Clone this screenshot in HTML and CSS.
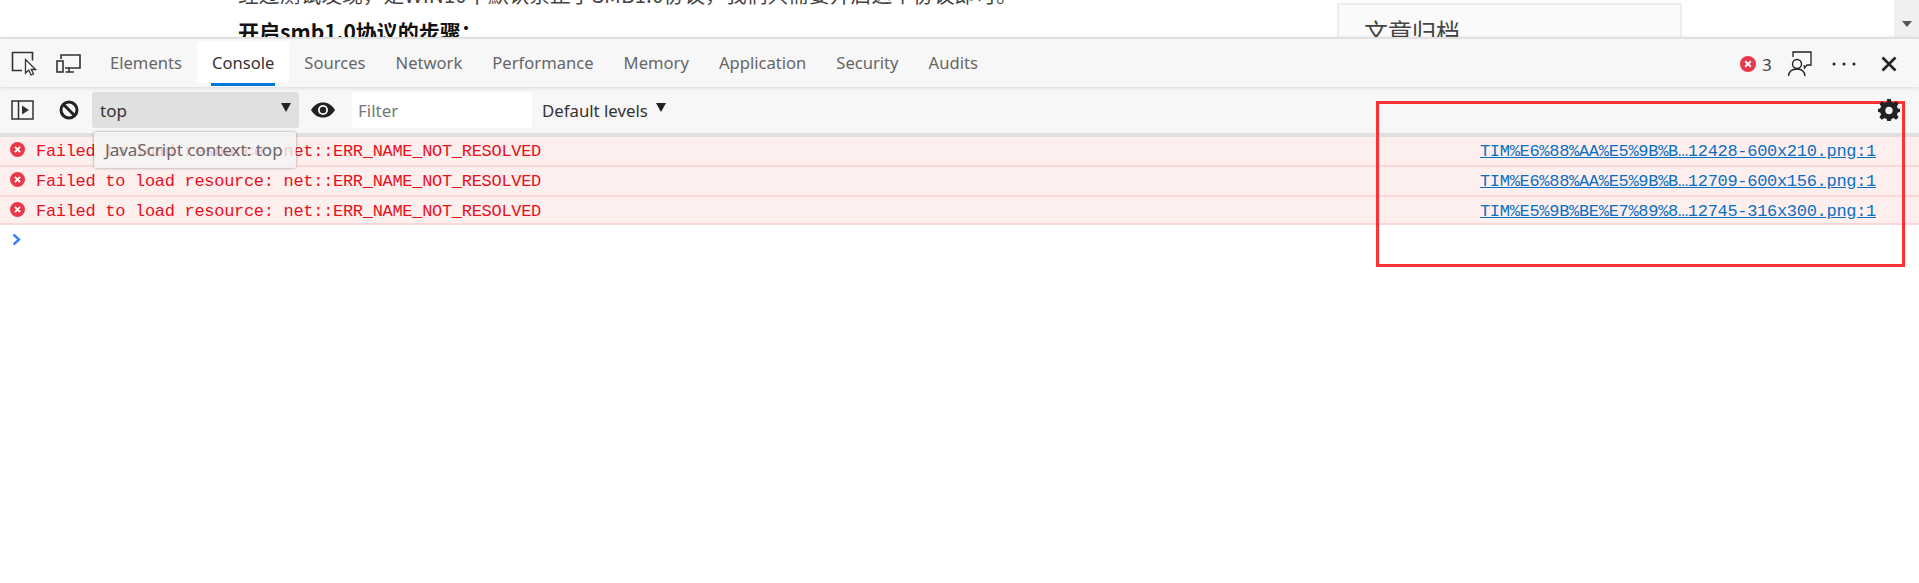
FILE: index.html
```html
<!DOCTYPE html>
<html lang="zh">
<head>
<meta charset="utf-8">
<title>DevTools Console</title>
<link rel="stylesheet" href="styles.css">
</head>
<body>
<div class="page">
  <div class="article">
    <p class="article-line">经过测试发现，是WIN10中默认禁止了SMB1.0协议，我们只需要开启这个协议即可。</p>
    <h3 class="article-head">开启smb1.0协议的步骤：</h3>
  </div>
  <div class="card"><span class="card-title">文章归档</span></div>
  <div class="scrollbar"><span class="scroll-arrow"></span></div>
</div>

<div class="tabbar">
  <div class="tab-tools">
    <svg class="ico" width="26" height="26" viewBox="0 0 26 26"><path d="M11 19.5H1.500V1.500H21.500V9.500" fill="none" stroke="#333" stroke-width="1.600"/><path d="M14.500 8.500V22L17.800 19L20 24L22.500 23L20.300 18.500H24.500Z" fill="#fff" stroke="#333" stroke-width="1.300"/></svg>
    <svg class="ico" width="26" height="20" viewBox="0 0 26 20"><path d="M5 5V1H24V14H9M13 14V18M9.500 18H18" fill="none" stroke="#333" stroke-width="1.600"/><rect x="1" y="7" width="6" height="11" fill="none" stroke="#333" stroke-width="1.600"/></svg>
  </div>
  <div class="tab">Elements</div>
  <div class="tab tab-active">Console</div>
  <div class="tab">Sources</div>
  <div class="tab">Network</div>
  <div class="tab">Performance</div>
  <div class="tab">Memory</div>
  <div class="tab">Application</div>
  <div class="tab">Security</div>
  <div class="tab">Audits</div>
  <div class="tab-right">
    <svg class="err-badge" width="16" height="16" viewBox="0 0 16 16"><circle cx="8" cy="8" r="8" fill="#e8384a"/><path d="M5.200 5.200L10.800 10.800M10.800 5.200L5.200 10.800" stroke="#fff" stroke-width="2"/></svg>
    <span class="err-count">3</span>
    <svg class="feedback" width="26" height="26" viewBox="0 0 26 26"><path d="M6 6V1H24V14H20L17.500 17L17 14" fill="none" stroke="#222" stroke-width="1.300"/><circle cx="10" cy="13" r="4.500" fill="#f7f7f7" stroke="#222" stroke-width="1.400"/><path d="M1.500 25C2 20 5 18 10 18C15 18 17.500 20 18 25" fill="none" stroke="#222" stroke-width="1.400"/></svg>
    <svg class="dots" width="24" height="4" viewBox="0 0 24 4"><circle cx="2" cy="2" r="1.500" fill="#222"/><circle cx="12" cy="2" r="1.500" fill="#222"/><circle cx="22" cy="2" r="1.500" fill="#222"/></svg>
    <svg class="close" width="16" height="16" viewBox="0 0 16 16"><path d="M1.500 1.500L14.500 14.500M14.500 1.500L1.500 14.500" stroke="#222" stroke-width="2.600"/></svg>
  </div>
</div>

<div class="toolbar">
  <svg class="side-ico" width="23" height="20" viewBox="0 0 23 20"><rect x="1" y="1" width="21" height="18" fill="none" stroke="#333" stroke-width="1.500"/><path d="M7.500 1V19" stroke="#333" stroke-width="1.500"/><path d="M11 5.500L18 10L11 14.500Z" fill="#333"/></svg>
  <svg class="clear-ico" width="20" height="20" viewBox="0 0 20 20"><circle cx="10" cy="10" r="8" fill="none" stroke="#222" stroke-width="3"/><path d="M4.500 4.500L15.500 15.500" stroke="#222" stroke-width="3"/></svg>
  <div class="context">
    <span>top</span>
    <span class="caret"></span>
  </div>
  <svg class="eye" width="24" height="16" viewBox="0 0 24 16"><path d="M0 8C3 3 7 .5 12 .5S21 3 24 8C21 13 17 15.500 12 15.500S3 13 0 8Z" fill="#222"/><circle cx="12" cy="8" r="5" fill="#f7f7f7"/><circle cx="12" cy="8" r="3.200" fill="#222"/></svg>
  <div class="filter">Filter</div>
  <div class="levels">Default levels<span class="caret"></span></div>
  <svg class="gear" width="22" height="22" viewBox="0 0 24 24"><path fill="#222" fill-rule="evenodd" d="M10 0H14L14.600 3.300L16.900 4.300L19.700 2.400L22.500 5.200L20.600 8L21.600 10.300L24 10.800V14.200L21.600 14.700L20.600 17L22.500 19.800L19.700 22.600L16.900 20.700L14.600 21.700L14 24H10L9.400 21.700L7.100 20.700L4.300 22.600L1.500 19.800L3.400 17L2.400 14.700L0 14.200V10.800L2.400 10.300L3.400 8L1.500 5.200L4.300 2.400L7.100 4.300L9.400 3.300ZM12 8.500A4 4 0 1 0 12 16.500A4 4 0 1 0 12 8.500Z"/></svg>
</div>

<div class="messages">
  <div class="row">
    <svg class="row-ico" width="15" height="15" viewBox="0 0 16 16"><circle cx="8" cy="8" r="8" fill="#e8384a"/><path d="M5.200 5.200L10.800 10.800M10.800 5.200L5.200 10.800" stroke="#fff" stroke-width="2"/></svg>
    <span class="msg">Failed to load resource: net::ERR_NAME_NOT_RESOLVED</span>
    <a class="src">TIM%E6%88%AA%E5%9B%B…12428-600x210.png:1</a>
  </div>
  <div class="row">
    <svg class="row-ico" width="15" height="15" viewBox="0 0 16 16"><circle cx="8" cy="8" r="8" fill="#e8384a"/><path d="M5.200 5.200L10.800 10.800M10.800 5.200L5.200 10.800" stroke="#fff" stroke-width="2"/></svg>
    <span class="msg">Failed to load resource: net::ERR_NAME_NOT_RESOLVED</span>
    <a class="src">TIM%E6%88%AA%E5%9B%B…12709-600x156.png:1</a>
  </div>
  <div class="row">
    <svg class="row-ico" width="15" height="15" viewBox="0 0 16 16"><circle cx="8" cy="8" r="8" fill="#e8384a"/><path d="M5.200 5.200L10.800 10.800M10.800 5.200L5.200 10.800" stroke="#fff" stroke-width="2"/></svg>
    <span class="msg">Failed to load resource: net::ERR_NAME_NOT_RESOLVED</span>
    <a class="src">TIM%E5%9B%BE%E7%89%8…12745-316x300.png:1</a>
  </div>
</div>
<div class="prompt">
  <svg width="9" height="13" viewBox="0 0 9 13"><path d="M1.500 1.500L7 6.500L1.500 11.500" fill="none" stroke="#3b82f6" stroke-width="2.400"/></svg>
</div>

<div class="tooltip">JavaScript context: top</div>
<div class="annotation"></div>
</body>
</html>
```
FILE: styles.css
```css
* { box-sizing: border-box; }
html, body { margin: 0; height: 583px; overflow: hidden; background: #fff; }
body { font-family: "Noto Sans", "Noto Sans CJK SC", sans-serif; position: relative; }

.page { height: 37px; overflow: hidden; display: flex; background: #fff; }
.article { width: 1337px; padding-left: 238px; font-family: "Noto Sans CJK SC", sans-serif; flex: none; }
.article-line { margin: -21px 0 0; font-size: 20.800px; line-height: 30px; color: #444; white-space: nowrap; }
.article-head { margin: 7px 0 0; font-size: 21px; line-height: 30px; color: #111; font-weight: 700; white-space: nowrap; }
.card { width: 345px; height: 60px; margin-top: 3px; flex: none; background: #fafafa; border: 2px solid #eee; padding: 9px 0 0 25px; }
.card-title { font-family: "Noto Sans CJK SC", sans-serif; font-size: 24px; line-height: 34px; color: #444; }
.scrollbar { width: 25px; margin-left: auto; background: #f0f0f0; display: flex; justify-content: center; padding-top: 21px; }
.scroll-arrow { width: 0; height: 0; border-left: 5.500px solid transparent; border-right: 5.500px solid transparent; border-top: 6px solid #555; }

.tabbar { height: 50px; border-top: 2px solid #e0e0e0; background: #f7f7f7; display: flex; align-items: stretch; padding-top: 2px; box-shadow: 0 1px 4px rgba(0,0,0,.12); position: relative; font-size: 16.600px; color: #666; }
.tab-tools { width: 95px; flex: none; display: flex; align-items: center; padding: 0 0 0 11px; gap: 19px; }
.ico { flex: none; }
.tab { padding: 0 15px; display: flex; align-items: center; height: 42px; margin-top: 0; white-space: nowrap; }
.tab-active { background: #fff; color: #333; border-radius: 3px; position: relative; }
.tab-active::after { content: ""; position: absolute; left: 14px; right: 14px; bottom: -3px; height: 3px; background: #0078d4; }
.tab-right { margin-left: auto; display: flex; align-items: center; padding-right: 22px; height: 46px; }
.err-badge { flex: none; margin-right: 6px; }
.err-count { width: 8px; font-size: 17px; color: #444; margin-right: 17px; line-height: 1; }
.feedback { flex: none; margin-right: 19px; }
.dots { flex: none; margin-right: 25px; }
.close { flex: none; }

.toolbar { height: 46px; background: #f7f7f7; display: flex; align-items: center; padding-left: 11px; font-size: 17px; color: #333; }
.side-ico { flex: none; margin-right: 25px; }
.clear-ico { flex: none; }
.context { width: 207px; height: 36px; margin-left: 13px; background: #e0e0e0; border-radius: 3px; padding: 0 8px; display: flex; align-items: center; justify-content: space-between; color: #333; }
.caret { display: inline-block; width: 0; height: 0; border-left: 5.500px solid transparent; border-right: 5.500px solid transparent; border-top: 9px solid #222; margin-top: -5px; }
.eye { flex: none; margin: 0 17px 0 12px; }
.filter { width: 180px; height: 36px; background: #fff; border-radius: 2px; padding-left: 6px; display: flex; align-items: center; color: #777; }
.levels { margin-left: 10px; display: flex; align-items: center; gap: 8px; font-size: 16.800px; white-space: nowrap; }
.gear { margin-left: auto; margin-right: 19px; flex: none; position: relative; z-index: 3; }

.messages { border-top: 4px solid; border-image: linear-gradient(#e0e0e0 50%, #fdd6d6 50%) 1; }
.row { height: 30px; border-bottom: 2px solid #fdd6d6; background: #feefef; display: flex; align-items: flex-start; padding: 0 43px 0 10px; line-height: 30px; font-family: "Liberation Mono", monospace; font-size: 17px; letter-spacing: -.300px; color: #e8101c; white-space: nowrap; }
.row:last-child { height: 28px; }
.row-ico { flex: none; margin: 5px 11px 0 0; }
.msg { flex: 1; }
.src { color: #0a6fc2; text-decoration: underline; }
.prompt { height: 28px; padding: 8px 0 0 12px; line-height: 0; }

.tooltip { position: absolute; left: 94px; top: 132px; width: 202px; height: 36px; background: rgba(244,244,244,.8); box-shadow: 0 0 3px rgba(0,0,0,.4); border-radius: 2px; font-size: 17px; line-height: 36px; padding-left: 11px; color: #666; white-space: nowrap; z-index: 2; }
.annotation { position: absolute; left: 1376px; top: 101px; width: 529px; height: 166px; border: 3px solid #f33; z-index: 2; }
```
